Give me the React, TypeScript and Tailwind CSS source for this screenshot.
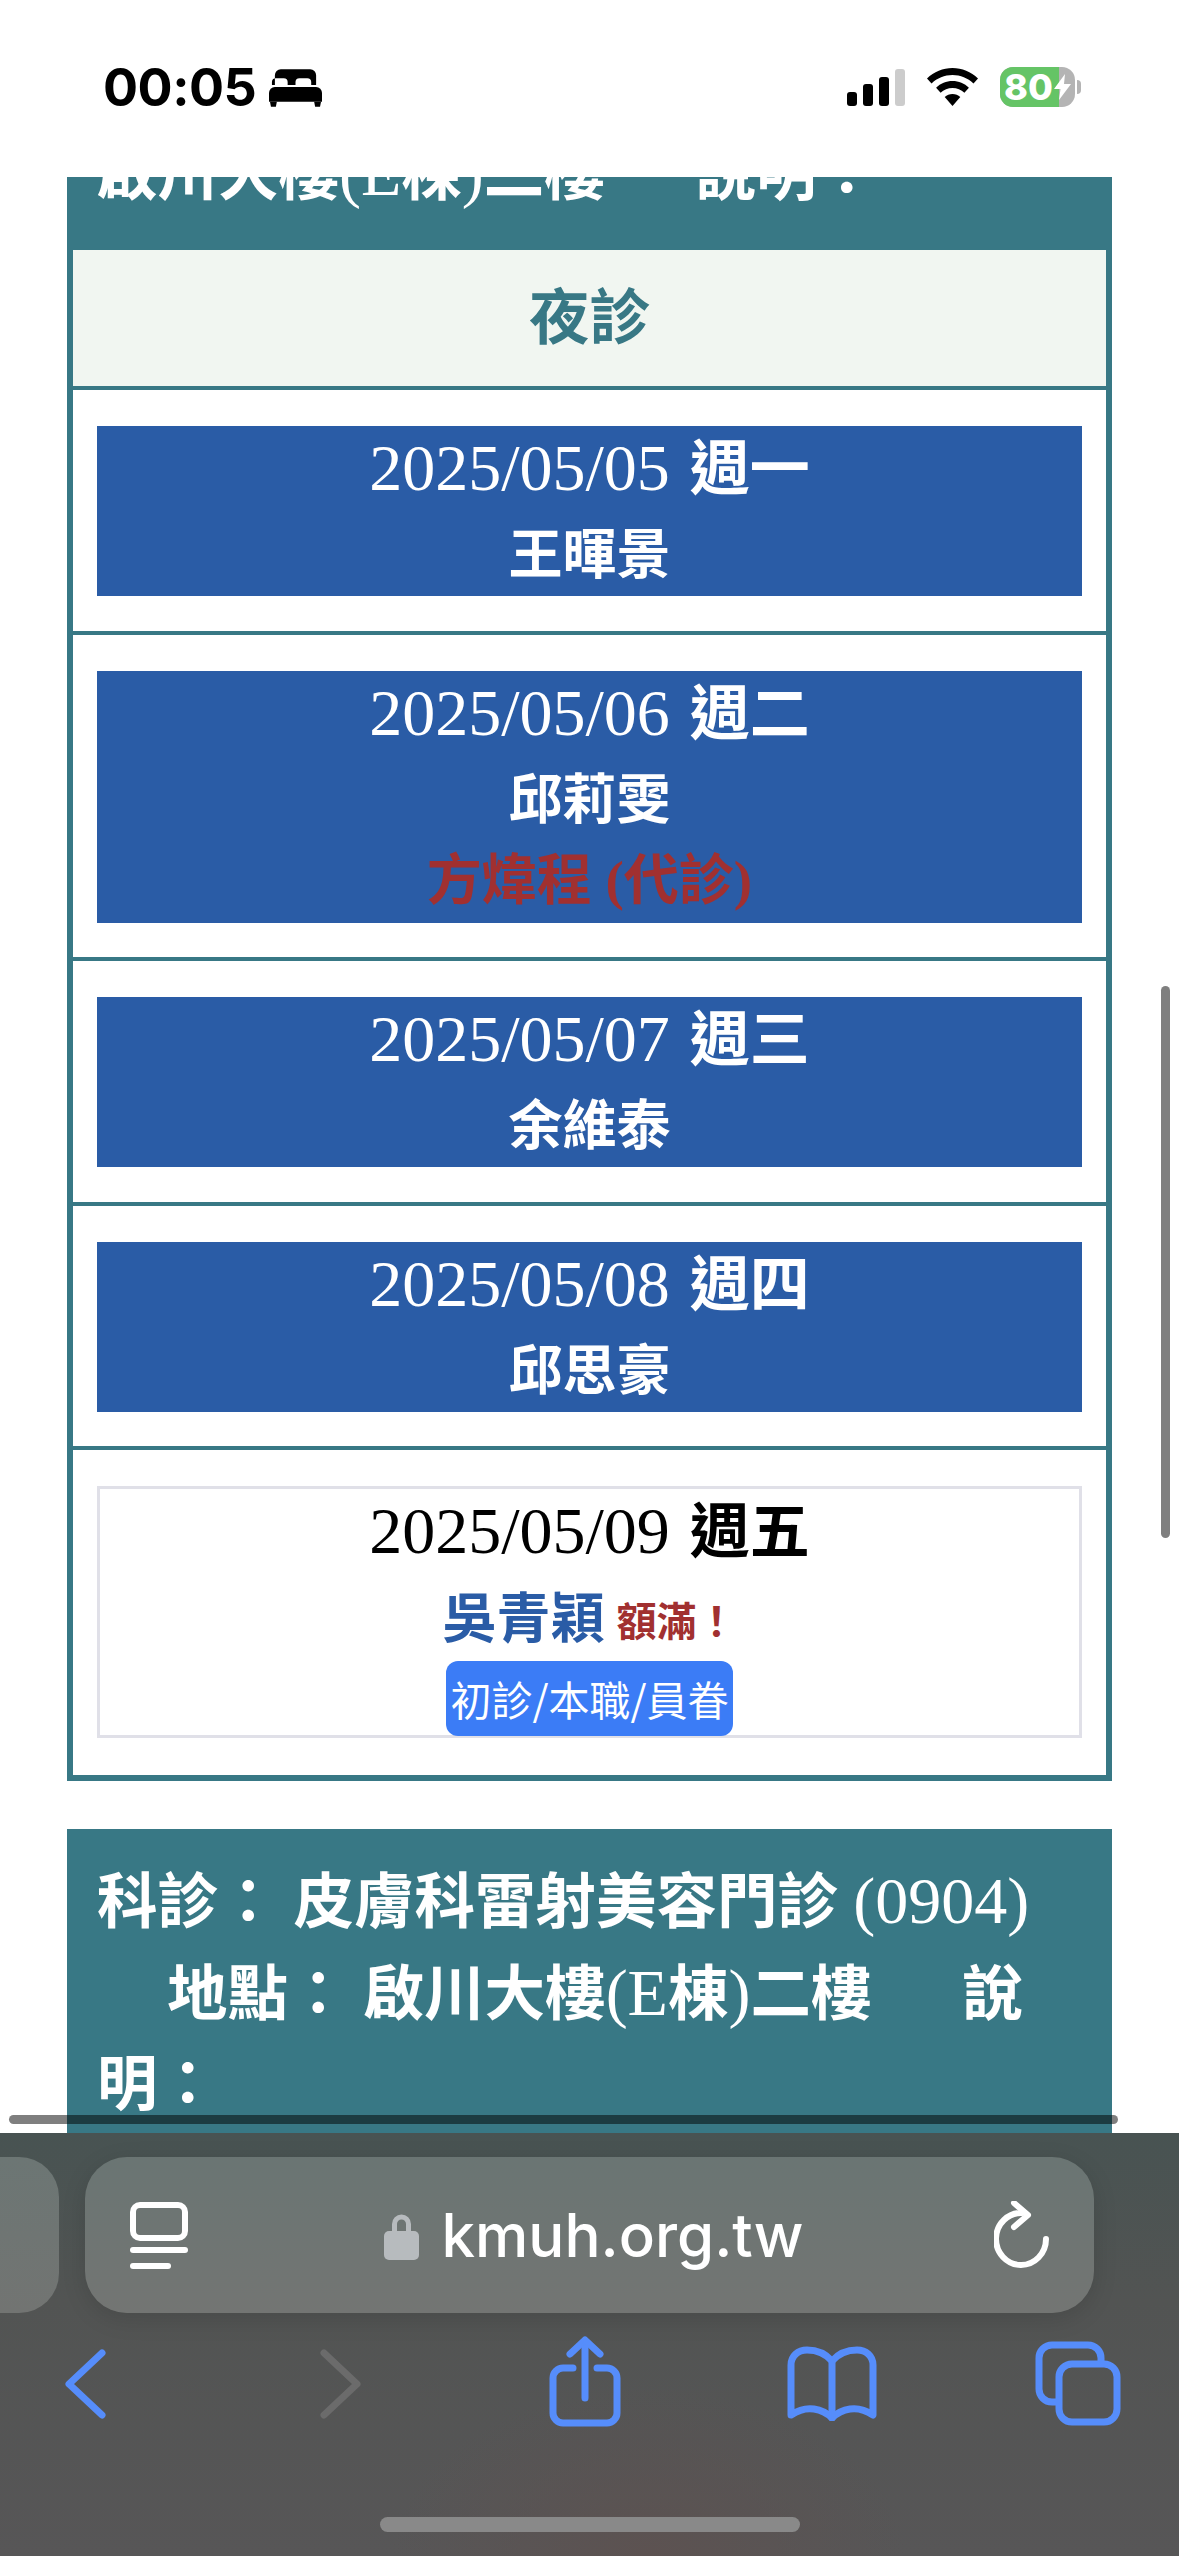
import React from 'react';

const serif = "font-['Liberation_Serif','Noto_Sans_CJK_TC',serif]";

const days = [
  { date: '2025/05/05', day: '週一', doctor: '王暉景' },
  { date: '2025/05/06', day: '週二', doctor: '邱莉雯', sub: '方煒程 (代診)' },
  { date: '2025/05/07', day: '週三', doctor: '余維泰' },
  { date: '2025/05/08', day: '週四', doctor: '邱思豪' },
];

function DateLine({ date, day }: { date: string; day: string }) {
  return (
    <div className="h-[85px] leading-[83px] whitespace-pre">
      <span className="text-[66px]">{date}</span>
      <span className="text-[60px] font-bold ml-[5px]"> {day}</span>
    </div>
  );
}

function StatusBar() {
  return (
    <div className="h-[177px] bg-white flex items-start justify-between pl-[103px] pr-[98px] pt-[62px]">
      <div className="flex items-center gap-[13px]">
        <span className="font-['Inter',sans-serif] font-bold text-[52px] leading-[52px] tracking-[-0.5px] text-black">00:05</span>
        <svg width="53" height="38" viewBox="0 0 54 38" fill="#000">
          <path d="M6 16V6a6 6 0 0 1 6-6h30a6 6 0 0 1 6 6v10h-5v-3a4 4 0 0 0-4-4h-8a4 4 0 0 0-4 4v3h-8v-3a4 4 0 0 0-4-4h-8a4 4 0 0 0-4 4v3z" />
          <path d="M6 18h42a6 6 0 0 1 6 6v9H0v-9a6 6 0 0 1 6-6z" />
          <path d="M1 33h7l-1 5H2zM46 33h7l-1 5h-5z" />
        </svg>
      </div>
      <div className="flex items-center gap-[22px] mt-[5px]">
        <div className="flex items-end gap-[6px] h-[37px]">
          <div className="w-[10px] h-[14px] rounded-[3px] bg-black" />
          <div className="w-[10px] h-[22px] rounded-[3px] bg-black" />
          <div className="w-[10px] h-[29px] rounded-[3px] bg-black" />
          <div className="w-[10px] h-[37px] rounded-[3px] bg-[#cccccc]" />
        </div>
        <svg width="51" height="38" viewBox="0 0 51 38" fill="#000">
          <path d="M25.5 0C35 0 44 3.800 51 10.500l-4.500 5C40.800 10 33.400 7 25.500 7S10.200 10 4.500 15.500L0 10.500C7 3.800 16 0 25.500 0z" />
          <path d="M25.500 13c6.200 0 12 2.400 16.400 6.700l-4.500 5C34.200 21.700 30 20 25.500 20s-8.700 1.700-11.900 4.700l-4.500-5C13.500 15.400 19.300 13 25.500 13z" />
          <path d="M25.500 26c3 0 5.700 1.100 7.800 3L25.500 38l-7.800-9c2.100-1.900 4.800-3 7.800-3z" />
        </svg>
        <div className="flex items-center gap-[2px]">
          <div className="relative w-[75px] h-[40px] rounded-[13px] overflow-hidden bg-[#b4b4b4]">
            <div className="w-[59px] h-full bg-[#65c466]" />
            <span className="absolute left-[4px] top-0 font-['Inter',sans-serif] font-extrabold text-[36px] leading-[40px] text-white">80</span>
            <svg className="absolute left-[54px] top-[7px]" width="17" height="26" viewBox="0 0 17 26" fill="#fff">
              <path d="M11 0 0 15h6.500L5 26 17 10h-7z" />
            </svg>
          </div>
          <div className="w-[4px] h-[14px] rounded-r-full bg-[#b4b4b4]" />
        </div>
      </div>
    </div>
  );
}

function Toolbar() {
  return (
    <div className="h-[423px] bg-[radial-gradient(ellipse_at_55%_100%,#5c5251_0%,transparent_28%),linear-gradient(180deg,#485352_0%,#525453_40%,#575657_100%)] pt-[24px]">
      <div className="flex gap-[26px] h-[156px]">
        <div className="w-[59px] rounded-r-[40px] bg-[linear-gradient(180deg,#6c7674,#727472)]" />
        <div className="w-[1009px] rounded-[42px] bg-[linear-gradient(180deg,#6a7573,#737573)] shadow-[0_6px_24px_rgba(0,0,0,0.12)] flex items-center pl-[45px] pr-[44px]">
          <svg width="58" height="67" viewBox="0 0 58 67" fill="none" stroke="#fff" strokeLinecap="round">
            <rect x="3" y="3" width="52" height="33" rx="7" strokeWidth="6" />
            <path d="M3 48h52" strokeWidth="6" />
            <path d="M3 64h35" strokeWidth="6" />
          </svg>
          <div className="flex-1 flex items-center justify-center gap-[22px] pl-[6px]">
            <svg width="35" height="49" viewBox="0 0 35 49" fill="#b7bbbe">
              <path d="M8 21v-8a9.500 9.500 0 0 1 19 0v8h-5v-8a4.500 4.500 0 0 0-9 0v8z" />
              <rect x="0" y="20" width="35" height="29" rx="5" />
            </svg>
            <span className="font-['Inter',sans-serif] font-medium text-[60px] leading-[70px] text-white">kmuh.org.tw</span>
          </div>
          <svg width="56" height="68" viewBox="0 0 56 68" fill="none" stroke="#fff" strokeWidth="6" strokeLinecap="round" strokeLinejoin="round">
            <path d="M52 38a25 26 0 1 1-24-26" />
            <path d="M20 2l14 12-14 12" />
          </svg>
        </div>
      </div>
      <div className="flex items-start pl-[65px] mt-[23px]">
        <svg className="mt-[13px]" width="41" height="70" viewBox="0 0 41 70" fill="none" stroke="#568dfb" strokeWidth="7" strokeLinecap="round" strokeLinejoin="round">
          <path d="M37 4 4 35l33 31" />
        </svg>
        <svg className="mt-[13px] ml-[214px]" width="41" height="70" viewBox="0 0 41 70" fill="none" stroke="#6b6b6b" strokeWidth="7" strokeLinecap="round" strokeLinejoin="round">
          <path d="M4 4l33 31L4 66" />
        </svg>
        <svg className="ml-[188px]" width="72" height="91" viewBox="0 0 72 91" fill="none" stroke="#568dfb" strokeWidth="7" strokeLinecap="round" strokeLinejoin="round">
          <path d="M24 32H14a10 10 0 0 0-10 10v35a10 10 0 0 0 10 10h44a10 10 0 0 0 10-10V42a10 10 0 0 0-10-10H48" />
          <path d="M36 62V5" />
          <path d="M21 18 36 4l15 14" />
        </svg>
        <svg className="mt-[10px] ml-[166px]" width="90" height="75" viewBox="0 0 90 75" fill="none" stroke="#568dfb" strokeWidth="7" strokeLinecap="round" strokeLinejoin="round">
          <path d="M45 15C38 7 28 4 20 4 11 4 4 10 4 19v50c9-6 16-7 23-6 7 1 13 4 18 9 5-5 11-8 18-9 7-1 14 0 23 6V19c0-9-7-15-16-15-8 0-18 3-25 11z" />
          <path d="M45 15v57" />
        </svg>
        <svg className="mt-[5px] ml-[158px]" width="86" height="85" viewBox="0 0 86 85" fill="none" stroke="#568dfb" strokeWidth="7" strokeLinejoin="round">
          <path d="M24 61h-7a13 13 0 0 1-13-13V17A13 13 0 0 1 17 4h36a13 13 0 0 1 13 13v6" />
          <rect x="24" y="23" width="58" height="58" rx="13" />
        </svg>
      </div>
      <div className="flex justify-center mt-[90px]">
        <div className="w-[420px] h-[15px] rounded-full bg-[#898989]" />
      </div>
    </div>
  );
}

export default function App() {
  return (
    <div className={`relative w-[1179px] h-[2556px] overflow-hidden flex flex-col bg-white ${serif}`}>
      <StatusBar />

      <div className="h-[1956px] overflow-hidden px-[67px]">
        {/* clipped header of the section scrolled past */}
        <div className="bg-[#387885] px-[30px] text-[60.5px] leading-[90px] font-bold text-white whitespace-pre h-[73px] overflow-hidden">
          <div className="-mt-[49px]">
            啟川大樓<span className="text-[66px] font-normal">(E</span>棟<span className="text-[66px] font-normal">)</span>二樓　  說明：
          </div>
        </div>

        <div className="border-[6px] border-t-0 border-[#387885] flex flex-col divide-y-[4px] divide-[#387885]">
          <div className="h-[140px] pt-[2px] bg-[#f1f6f1] flex items-center justify-center text-[60.5px] font-bold text-[#387885]">
            夜診
          </div>

          {days.map((d) => (
            <div key={d.date} className="px-[24px] pt-[36px] pb-[34.5px]">
              <div className="bg-[#2a5ca6] text-center text-white">
                <DateLine date={d.date} day={d.day} />
                <div className="h-[85px] text-[54px] leading-[91px] font-bold">{d.doctor}</div>
                {d.sub && <div className="h-[82px] text-[55px] leading-[79px] font-bold text-[#a13030]">{d.sub}</div>}
              </div>
            </div>
          ))}

          <div className="px-[24px] pt-[36px] pb-[37px]">
            <div className="border-[3px] border-[#e0e0e8] text-center text-black h-[252px]">
              <DateLine date="2025/05/09" day="週五" />
              <div className="h-[87px] pt-[6px] flex items-center justify-center gap-[12px] font-bold">
                <span className="text-[54px] text-[#2a5ca6]">吳青穎</span>
                <span className="text-[40px] text-[#a13030] mt-[5px]">額滿！</span>
              </div>
              <div className="flex justify-center">
                <span className="h-[75px] w-[287px] flex items-center justify-center rounded-[12px] bg-[#3b7cf6] text-[41px] text-white font-['Noto_Sans_CJK_TC',sans-serif] whitespace-pre">初診/本職/員眷</span>
              </div>
            </div>
          </div>
        </div>

        <div className="mt-[48px] bg-[#387885] px-[30px] pt-[27px] pb-[32px] text-[60.5px] leading-[90px] font-bold text-white whitespace-pre">
          <div>科診： 皮膚科雷射美容門診 <span className="text-[66px] font-normal">(0904)</span></div>
          <div className="pl-[70px]">地點： 啟川大樓<span className="text-[66px] font-normal">(E</span>棟<span className="text-[66px] font-normal">)</span>二樓　  說</div>
          <div>明：</div>
        </div>
      </div>

      <Toolbar />

      {/* overlay scrollbars */}
      <div className="absolute left-[9px] top-[2115px] w-[1109px] h-[9px] rounded-full bg-black/50" />
      <div className="absolute left-[1161px] top-[986px] w-[9px] h-[552px] rounded-full bg-black/50" />
    </div>
  );
}
